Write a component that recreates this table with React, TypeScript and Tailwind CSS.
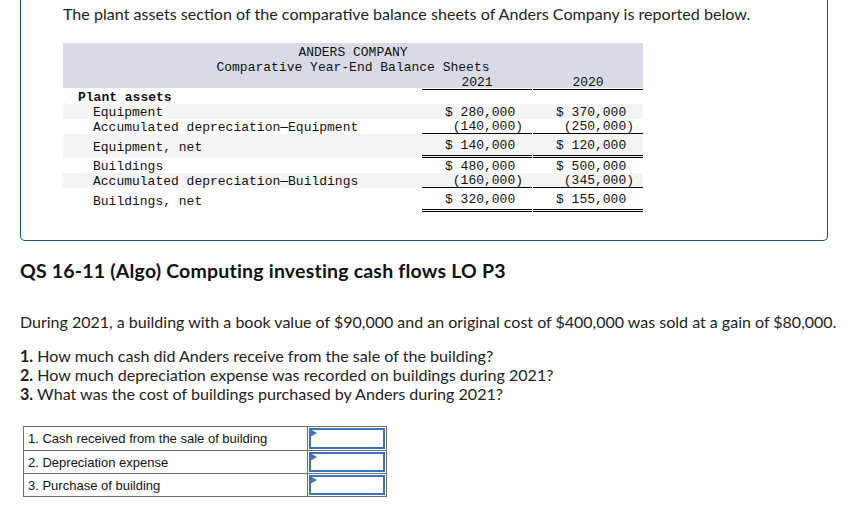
import React from "react";

const mono = { fontFamily: '"Liberation Mono", "Courier New", monospace' };

type Row = {
  label: string;
  a: string;
  b: string;
  neg?: boolean;
  total?: boolean;
  gray?: boolean;
  under?: "single" | "double";
};

const rows: Row[] = [
  { label: "Equipment", a: "$ 280,000", b: "$ 370,000", gray: true },
  { label: "Accumulated depreciation\u2014Equipment", a: "(140,000)", b: "(250,000)", neg: true, under: "single" },
  { label: "Equipment, net", a: "$ 140,000", b: "$ 120,000", total: true, gray: true, under: "double" },
  { label: "Buildings", a: "$ 480,000", b: "$ 500,000" },
  { label: "Accumulated depreciation\u2014Buildings", a: "(160,000)", b: "(345,000)", neg: true, gray: true, under: "single" },
  { label: "Buildings, net", a: "$ 320,000", b: "$ 155,000", total: true, under: "double" },
];

function Val({ v, neg, under }: { v: string; neg?: boolean; under?: "single" | "double" }) {
  const u =
    under === "single"
      ? "border-b border-black"
      : under === "double"
      ? "border-b-[3px] border-double border-black"
      : "";
  return (
    <div className={`w-[110px] flex items-center justify-end pr-[9px] pt-[2px] ${u}`}>
      <span className="whitespace-pre">{neg ? v : v + " "}</span>
    </div>
  );
}

export default function App() {
  const sans = { fontFamily: 'Lato, "Open Sans", sans-serif' };
  return (
    <div className="w-[860px] h-[525px] bg-white overflow-hidden text-[#222]" style={sans}>
      <div className="ml-[20px] w-[808px] border-x border-b border-[#124d8c] rounded-b-[5px] pt-[4px] pb-[28px]">
        <p className="ml-[42px] text-[16.1px] leading-[20px] text-[#222]">
          The plant assets section of the comparative balance sheets of Anders Company is reported below.
        </p>
        <div className="ml-[42px] mt-[19px] w-[580px] text-[13px] text-[#111]" style={mono}>
          <div className="bg-[#d8dbe6] h-[45px] flex flex-col">
            <div className="text-center leading-[15px] pt-[2px]">ANDERS COMPANY</div>
            <div className="text-center leading-[15px]">Comparative Year-End Balance Sheets</div>
            <div className="flex justify-end leading-[13px] pt-[1px]">
              <div className="w-[110px] text-center border-b border-black">2021</div>
              <div className="w-[1px]" />
              <div className="w-[110px] text-center border-b border-black">2020</div>
            </div>
          </div>
          <div className="h-[16px] flex items-center pl-[15px] pt-[3px] font-bold">Plant assets</div>
          {rows.map((r, i) => (
            <div
              key={i}
              className={`flex ${r.total ? "h-[24px]" : "h-[15px]"} ${r.gray ? "bg-[#f4f4f4]" : ""}`}
            >
              <div className="flex-1 flex items-center pl-[30px] pt-[2px] whitespace-pre leading-[15px]">{r.label}</div>
              <Val v={r.a} neg={r.neg} under={r.under} />
              <div className="w-[1px]" />
              <Val v={r.b} neg={r.neg} under={r.under} />
            </div>
          ))}
        </div>
      </div>

      <h2 className="ml-[20px] mt-[18px] text-[19.5px] tracking-[0.2px] leading-[24px] font-bold text-[#111]">
        QS 16-11 (Algo) Computing investing cash flows LO P3
      </h2>

      <p className="ml-[20px] mt-[29px] text-[16px] leading-[20px]">
        During 2021, a building with a book value of $90,000 and an original cost of $400,000 was sold at a gain of $80,000.
      </p>

      <div className="ml-[20px] mt-[14px] text-[16.1px] leading-[19px]">
        <div>
          <b>1.</b> How much cash did Anders receive from the sale of the building?
        </div>
        <div>
          <b>2.</b> How much depreciation expense was recorded on buildings during 2021?
        </div>
        <div>
          <b>3.</b> What was the cost of buildings purchased by Anders during 2021?
        </div>
      </div>

      <div
        className="ml-[23px] mt-[23px] w-[364px] border border-[#707070] text-[13px] text-[#111]"
        style={{ fontFamily: '"Liberation Sans", Arial, sans-serif' }}
      >
        {["1. Cash received from the sale of building", "2. Depreciation expense", "3. Purchase of building"].map(
          (t, i) => (
            <div key={i} className={`flex h-[23px] ${i > 0 ? "border-t border-[#707070]" : ""}`}>
              <div className="w-[284px] border-r border-[#707070] flex items-center pl-[4px] pt-[1px]">{t}</div>
              <div className="flex-1 p-[1px]">
                <div className="relative w-full h-full border-2 border-[#3b74bd]">
                  <svg className="absolute left-[-1px] top-[-1px]" width="7" height="8" viewBox="0 0 7 8">
                    <polygon points="0,0 7,4 0,8" fill="#3b74bd" />
                  </svg>
                </div>
              </div>
            </div>
          )
        )}
      </div>
    </div>
  );
}
